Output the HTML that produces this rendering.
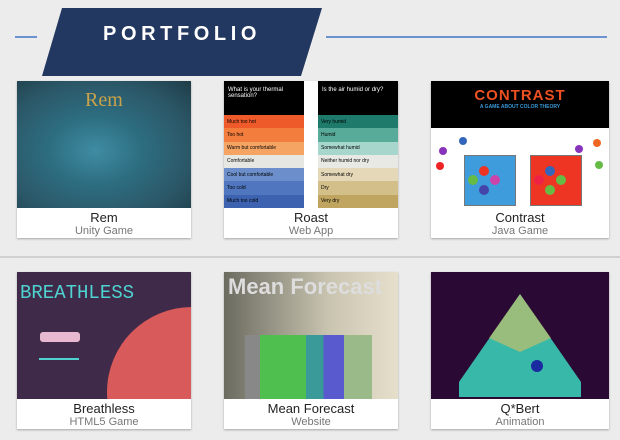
<!DOCTYPE html>
<html style="overflow:hidden"><head><style>
body{margin:0;width:620px;height:440px;background:#ececec;font-family:"Liberation Sans",sans-serif;position:relative;overflow:hidden}
.line{position:absolute;height:2px;background:#6a93cf;top:36px}
.banner{position:absolute;left:0;top:0}
.t{position:absolute;left:103px;top:23px;color:#fff;font-weight:bold;font-size:20px;letter-spacing:4.6px}
.card{position:absolute;width:174px;height:157px;background:#fff;box-shadow:0 1px 2px rgba(0,0,0,.3)}
.img{position:absolute;left:0;top:0;width:100%;height:127px;overflow:hidden}
.n{position:absolute;top:129px;width:100%;text-align:center;font-size:13px;color:#222}
.s{position:absolute;top:144px;width:100%;text-align:center;font-size:11px;color:#777}
.sep{position:absolute;left:0;width:620px;top:256px;height:2px;background:#d0d0d0}
.row{display:flex;flex-direction:column}
.row div{flex:1;font-size:5px;padding-left:3px;display:flex;align-items:center}
</style></head><body>
<div class="line" style="left:15px;width:22px"></div>
<div class="line" style="left:326px;width:281px"></div>
<svg class="banner" width="620" height="80"><polygon points="62,8 322,8 301,76 42,76" fill="#223860"/></svg>
<div class="t">PORTFOLIO</div>

<div class="card" style="left:17px;top:81px"><div class="img" style="background:radial-gradient(ellipse at 45% 55%,#3f8ca3 0,#2d6d80 35%,#2b5767 70%,#1f3d48 100%)"><div style="position:absolute;left:68px;top:8px;color:#c9a24a;font-size:20px;font-family:'Liberation Serif',serif">Rem</div></div><div class="n">Rem</div><div class="s">Unity Game</div></div>

<div class="card" style="left:224px;top:81px"><div class="img" style="background:#fff">
<div style="position:absolute;left:0;top:0;width:80px;height:127px;background:#000">
<div style="color:#fff;font-size:6px;padding:6px 4px;height:22px">What is your thermal sensation?</div>
<div class="row" style="height:93px;position:absolute;top:34px;width:80px"><div style="background:#ee5a2a">Much too hot</div><div style="background:#f27d3c">Too hot</div><div style="background:#f6a463">Warm but comfortable</div><div style="background:#e6e6e2">Comfortable</div><div style="background:#6c8fcb">Cool but comfortable</div><div style="background:#4f76bf">Too cold</div><div style="background:#3d62b0">Much too cold</div></div></div>
<div style="position:absolute;left:94px;top:0;width:80px;height:127px;background:#000">
<div style="color:#fff;font-size:6px;padding:6px 4px;height:22px">Is the air humid or dry?</div>
<div class="row" style="height:93px;position:absolute;top:34px;width:80px"><div style="background:#1e7a6a">Very humid</div><div style="background:#58ab98">Humid</div><div style="background:#a6d6cc">Somewhat humid</div><div style="background:#e8e8e4">Neither humid nor dry</div><div style="background:#e5d8b8">Somewhat dry</div><div style="background:#d2bf8a">Dry</div><div style="background:#bfa560">Very dry</div></div></div>
</div><div class="n">Roast</div><div class="s">Web App</div></div>

<div class="card" style="left:431px;top:81px;width:178px"><div class="img" style="background:#fff">
<div style="position:absolute;left:0;top:0;width:100%;height:47px;background:#000"><div style="text-align:center;color:#ee5022;font-weight:bold;font-size:15px;padding-top:6px;letter-spacing:1px">CONTRAST</div><div style="text-align:center;color:#3a9ad9;font-size:5px;font-weight:bold">A GAME ABOUT COLOR THEORY</div></div>
<div style="position:absolute;left:33px;top:74px;width:50px;height:49px;background:#3e9bdc;border:1px solid #777"></div>
<div style="position:absolute;left:99px;top:74px;width:50px;height:49px;background:#ee3524;border:1px solid #777"></div>
<svg style="position:absolute;left:0;top:0" width="178" height="127"><circle cx="53" cy="90" r="5" fill="#e32"/><circle cx="42" cy="99" r="5" fill="#6b4"/><circle cx="64" cy="99" r="5" fill="#c4a"/><circle cx="53" cy="109" r="5" fill="#44a"/><circle cx="119" cy="90" r="5" fill="#36b"/><circle cx="108" cy="99" r="5" fill="#e24"/><circle cx="130" cy="99" r="5" fill="#6b4"/><circle cx="119" cy="109" r="5" fill="#6b4"/><circle cx="12" cy="70" r="4" fill="#83b"/><circle cx="32" cy="60" r="4" fill="#36b"/><circle cx="9" cy="85" r="4" fill="#e22"/><circle cx="148" cy="68" r="4" fill="#83b"/><circle cx="166" cy="62" r="4" fill="#e62"/><circle cx="168" cy="84" r="4" fill="#6b4"/></svg>
</div><div class="n">Contrast</div><div class="s">Java Game</div></div>

<div class="sep"></div>

<div class="card" style="left:17px;top:272px"><div class="img" style="background:#3f2a4a"><div style="position:absolute;left:3px;top:10px;color:#4fd3d0;font-size:19px;font-family:'Liberation Mono',monospace">BREATHLESS</div><div style="position:absolute;left:90px;top:35px;width:170px;height:170px;border-radius:50%;background:#d95a5a"></div><div style="position:absolute;left:23px;top:60px;width:40px;height:10px;background:#e8b8d0;border-radius:3px"></div><div style="position:absolute;left:22px;top:86px;width:40px;height:2px;background:#4fd3d0"></div></div><div class="n">Breathless</div><div class="s">HTML5 Game</div></div>

<div class="card" style="left:224px;top:272px"><div class="img" style="background:linear-gradient(90deg,#6b6b60,#c9c4b0 60%,#e6dfcc)"><div style="position:absolute;left:4px;top:2px;color:#ddd;font-size:22px;font-weight:bold">Mean Forecast</div><div style="position:absolute;left:21px;top:63px;width:127px;height:70px;background:linear-gradient(90deg,#888 0 12%,#4fbf4f 12% 48%,#3a9a9a 48% 62%,#5a5acf 62% 78%,#9aba8a 78%)"></div></div><div class="n">Mean Forecast</div><div class="s">Website</div></div>

<div class="card" style="left:431px;top:272px;width:178px"><div class="img" style="background:#2a0a35"><svg width="178" height="127"><polygon points="89,22 150,110 150,125 28,125 28,110" fill="#38b8a8"/><polygon points="89,22 120,66 89,80 58,66" fill="#d8c060" opacity=".6"/><circle cx="106" cy="94" r="6" fill="#1a2aa0"/></svg></div><div class="n">Q*Bert</div><div class="s">Animation</div></div>
</body></html>
